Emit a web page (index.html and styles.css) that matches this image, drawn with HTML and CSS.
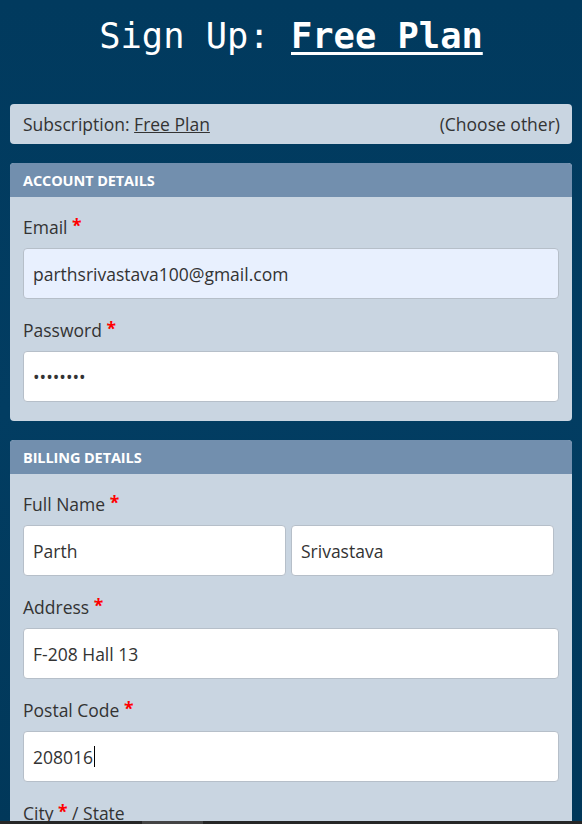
FILE: index.html
```html
<!DOCTYPE html>
<html lang="en">
<head>
<meta charset="utf-8">
<title>Sign Up: Free Plan</title>
<link rel="stylesheet" href="styles.css">
</head>
<body>
<main class="page">
  <h1 class="title">Sign Up: <a class="title-link" href="#">Free Plan</a></h1>

  <div class="subscription">
    <span>Subscription: <a class="plain-link" href="#">Free Plan</a></span>
    <span>(Choose other)</span>
  </div>

  <section class="card">
    <h2 class="card-head">Account Details</h2>
    <div class="card-body">
      <label class="label">Email <span class="req">*</span></label>
      <input class="field field-auto" type="text" value="parthsrivastava100@gmail.com">
      <label class="label">Password <span class="req">*</span></label>
      <input class="field field-last" type="password" value="password">
    </div>
  </section>

  <section class="card">
    <h2 class="card-head">Billing Details</h2>
    <div class="card-body">
      <label class="label">Full Name <span class="req">*</span></label>
      <div class="name-row">
        <input class="field" type="text" value="Parth">
        <input class="field" type="text" value="Srivastava">
      </div>
      <label class="label">Address <span class="req">*</span></label>
      <input class="field" type="text" value="F-208 Hall 13">
      <label class="label">Postal Code <span class="req">*</span></label>
      <div class="field field-focus"><span>208016</span><span class="caret"></span></div>
      <label class="label">City <span class="req">*</span> / State</label>
    </div>
  </section>
</main>
<div class="hscroll"><div class="hscroll-thumb"></div></div>
</body>
</html>
```

FILE: styles.css
```css
html, body {
  margin: 0;
  padding: 0;
}
body {
  background: linear-gradient(180deg, #013a5e 0%, #023d62 50%, #01385a 100%);
  font-family: "Open Sans", "Noto Sans", sans-serif;
  color: #333;
  height: 824px;
  overflow: hidden;
}
.page {
  padding: 0 10px 0 10px;
  display: flex;
  flex-direction: column;
}
.title {
  margin: 14px 0 0 0;
  height: 90px;
  text-align: center;
  font-family: "DejaVu Sans Mono", "Liberation Mono", monospace;
  font-weight: normal;
  font-size: 35.4px;
  line-height: 44px;
  color: #fff;
}
.title-link {
  color: #fff;
  font-weight: bold;
  text-decoration: underline;
  text-decoration-thickness: 3px;
  text-underline-offset: 4px;
}
.subscription {
  height: 40px;
  box-sizing: border-box;
  background: #c9d5e1;
  border-radius: 4px;
  padding: 0 12px 0 13px;
  display: flex;
  align-items: center;
  justify-content: space-between;
  font-size: 17.5px;
  margin-bottom: 19px;
}
.plain-link {
  color: #333;
  text-decoration: underline;
}
.card {
  background: #c9d5e1;
  border-radius: 4px;
  overflow: hidden;
  margin-bottom: 19px;
}
.card-head {
  margin: 0;
  height: 34px;
  box-sizing: border-box;
  background: #728fae;
  color: #fff;
  font-size: 14.5px;
  font-weight: bold;
  text-transform: uppercase;
  letter-spacing: -0.1px;
  padding: 0 13px;
  display: flex;
  align-items: center;
}
.card-body {
  padding: 18px 13px 19px 13px;
  display: flex;
  flex-direction: column;
}
.label {
  font-size: 17.5px;
  line-height: 24px;
  margin-bottom: 9px;
  color: #333;
}
.req {
  color: #f00;
  font-weight: bold;
  position: relative;
  top: -2px;
}
.field {
  box-sizing: border-box;
  height: 51px;
  width: 100%;
  border: 1px solid #b6bfc9;
  border-radius: 4px;
  background: #fff;
  padding: 0 9px;
  font-family: "Open Sans", "Noto Sans", sans-serif;
  font-size: 17.5px;
  color: #333;
  margin: 0 0 19px 0;
  outline: none;
}
.field-auto {
  background: #e8f0fe;
}
.field-last {
  margin-bottom: 0;
}
.field-focus {
  display: flex;
  align-items: center;
}
.caret {
  display: inline-block;
  width: 1px;
  height: 21px;
  background: #000;
  margin-left: 1px;
}
.name-row {
  display: grid;
  grid-template-columns: 49% 49%;
  column-gap: 1%;
}
.hscroll {
  position: fixed;
  left: 0;
  right: 0;
  bottom: 0;
  height: 3px;
  background: #262626;
}
.hscroll-thumb {
  position: absolute;
  left: 142px;
  width: 61px;
  top: 0;
  bottom: 0;
  background: #444;
}
```
